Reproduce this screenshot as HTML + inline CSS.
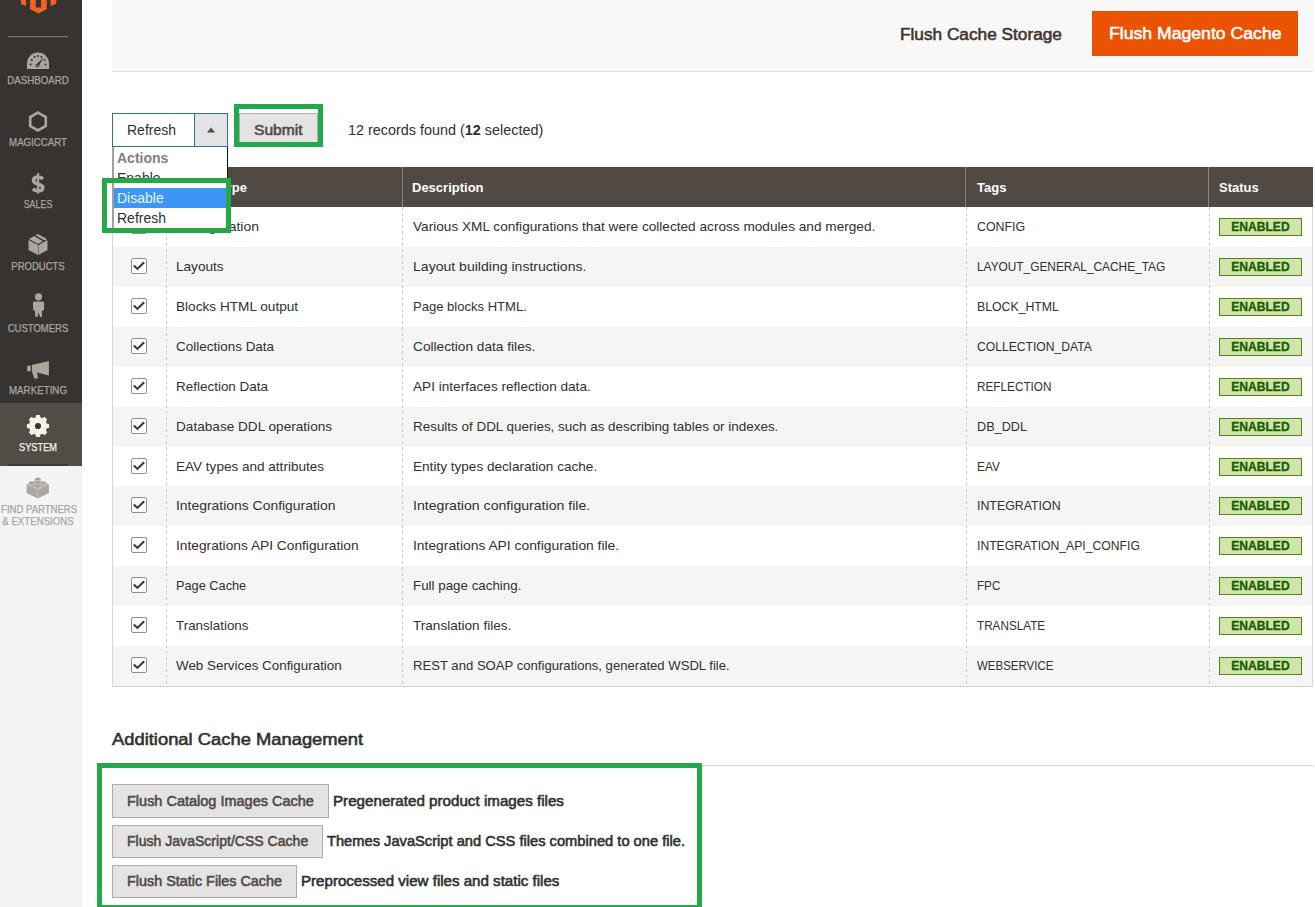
<!DOCTYPE html>
<html><head><meta charset="utf-8">
<style>
*{margin:0;padding:0;box-sizing:border-box}
html,body{width:1315px;height:907px;overflow:hidden;background:#fff;font-family:"Liberation Sans",sans-serif;color:#303030}
.abs{position:absolute}
.sb{font-weight:normal;-webkit-text-stroke:0.55px currentColor;transform-origin:0 50%}
#side{position:absolute;left:0;top:0;width:82px;height:466px;background:#373330}
#sidelow{position:absolute;left:0;top:466px;width:82px;height:441px;background:#f4f4f4}
.mlabel{position:absolute;left:-3px;width:82px;text-align:center;font-size:10.6px;-webkit-text-stroke:0.25px currentColor;color:#aaa6a0;white-space:nowrap;line-height:12px}
#hdr{position:absolute;left:112px;top:0;width:1201px;height:72px;background:#f8f8f8;border-bottom:1px solid #e3e3e3}
.t{position:absolute;white-space:nowrap}
.btn2{position:absolute;background:#e3e3e3;border:1px solid #adadad;color:#514943;font-weight:bold;white-space:nowrap}
.gbox{position:absolute;border:5px solid #23a84b}
#tbl{position:absolute;left:112px;top:167px;width:1201px;height:520px;border:1px solid #d6d6d6;border-top:none}
.hrow{position:absolute;left:-1px;top:0;width:1201px;height:40px;background:#514943}
.hsep{position:absolute;top:0;width:1px;height:40px;background:#8a837f}
.ht{position:absolute;top:1px;line-height:40px;color:#fff;font-weight:bold;font-size:13px;white-space:nowrap}
.row{position:absolute;left:0;width:1199px;height:40px}
.row.alt{background:#f5f5f5}
.dsep{position:absolute;top:40px;width:1px;height:480px;background-image:linear-gradient(#c8c8c8 50%,transparent 50%);background-size:1px 6px}
.cell{position:absolute;top:0;transform-origin:0 50%;line-height:40px;font-size:13.5px;color:#303030;white-space:nowrap}
.cb{position:absolute;left:18px;top:11px;width:16px;height:16px;border:1px solid #8f8f8f;border-radius:2px;background:#fff}
.tag{left:864px;font-size:13px}
.cb svg{position:absolute;left:-1px;top:-1px}
.badge{position:absolute;left:1106px;top:11px;width:83px;height:18px;background:#d0e5a9;border:1px solid #5b8116;color:#185b00;font-weight:bold;font-size:13px;line-height:16px;text-align:center}
.badge span{display:inline-block;transform:scaleX(0.93);-webkit-text-stroke:0.3px #185b00}
</style></head><body>

<!-- sidebar -->
<div id="side"></div>
<div id="sidelow"></div>
<div class="abs" style="left:0;top:403px;width:82px;height:63px;background:#524c47"></div>
<div class="abs" style="left:8px;top:464px;width:60px;height:2px;background:#3e3935"></div>
<svg class="abs" style="left:0;top:0" width="82" height="40" viewBox="0 0 82 40">
  <polygon points="20.7,0 25.9,0 25.9,6.2 21,3.7" fill="#f26322"/>
  <polygon points="30.1,0 35.8,0 35.8,7.4 41,7.4 41,0 46.7,0 46.7,9.2 38.5,13.6 30.1,9.2" fill="#f26322"/>
  <polygon points="50.7,0 56.4,0 56.1,3.7 50.7,6.2" fill="#f26322"/>
  <rect x="8" y="36" width="60" height="1.2" fill="#7a746e"/>
</svg>
<!-- dashboard gauge -->
<svg class="abs" style="left:26px;top:52px" width="24" height="18" viewBox="0 0 24 18">
  <path d="M1,17 L1,11.5 A11,11 0 0 1 23,11.5 L23,17 Z" fill="#aaa6a0"/>
  <g fill="#373330"><circle cx="4.5" cy="12.5" r="1"/><circle cx="5.8" cy="8" r="1"/><circle cx="8.6" cy="5" r="1"/><circle cx="12" cy="4" r="1"/><circle cx="15.4" cy="5" r="1"/><circle cx="18.6" cy="8" r="1"/><circle cx="19.5" cy="12.5" r="1"/></g>
  <path d="M10.2,12.8 L17.5,5.5 L12.8,14 Z" fill="#373330"/><circle cx="11.3" cy="13.6" r="1.8" fill="#373330"/><circle cx="11.3" cy="13.6" r="0.8" fill="#aaa6a0"/>
</svg>
<div class="mlabel" style="transform:scaleX(0.914);top:74px">DASHBOARD</div>
<!-- hexagon -->
<svg class="abs" style="left:27px;top:110px" width="22" height="23" viewBox="0 0 22 23">
  <polygon points="11,2.6 18.8,7 18.8,16 11,20.4 3.2,16 3.2,7" fill="none" stroke="#aaa6a0" stroke-width="2.6"/>
</svg>
<div class="mlabel" style="transform:scaleX(0.913);top:136px">MAGICCART</div>
<!-- dollar -->
<svg class="abs" style="left:30px;top:172px" width="16" height="23" viewBox="30 172 16 23">
  <rect x="37" y="173" width="2.2" height="20.6" fill="#aaa6a0"/>
  <path d="M42.9,179 C41.6,177.6 40,177 38.2,177 C35.4,177 33.6,178.4 33.6,180.6 C33.6,185.2 42.8,183.2 42.8,187.4 C42.8,189.6 40.8,190.8 38,190.8 C36,190.8 34.2,190.2 32.8,188.9" fill="none" stroke="#aaa6a0" stroke-width="3.6"/>
</svg>
<div class="mlabel" style="transform:scaleX(0.84);top:198px">SALES</div>
<!-- products box -->
<svg class="abs" style="left:28px;top:234px" width="20" height="22" viewBox="0 0 20 22">
  <polygon points="0.5,6 10,11 10,21 0.5,16" fill="#aaa6a0"/>
  <polygon points="10.5,11 19.5,6 19.5,16 10.5,21" fill="#aaa6a0"/>
  <polygon points="1,5 6,2 15,7.3 10,10" fill="#aaa6a0"/>
  <polygon points="7.5,1.2 10,0 19,5 16.5,6.4" fill="#aaa6a0"/>
</svg>
<div class="mlabel" style="transform:scaleX(0.896);top:260px">PRODUCTS</div>
<!-- person -->
<svg class="abs" style="left:32px;top:292px" width="13" height="26" viewBox="0 0 13 26">
  <circle cx="6.5" cy="4.8" r="3.6" fill="#aaa6a0"/>
  <path d="M0.9,11 Q0.9,9.5 2.4,9.5 L10.7,9.5 Q12.2,9.5 12.2,11 L12,17.8 L10,18.9 L9.8,25 L8.1,25 L6.7,20.5 L5.4,25 L3.4,25 L2.9,18.9 L1.2,17.8 Z" fill="#aaa6a0"/>
</svg>
<div class="mlabel" style="transform:scaleX(0.896);top:322px">CUSTOMERS</div>
<!-- megaphone -->
<svg class="abs" style="left:27px;top:360px" width="23" height="20" viewBox="0 0 23 20">
  <rect x="0.2" y="5.7" width="3.5" height="5.5" fill="#aaa6a0"/>
  <polygon points="4.85,4.9 21.9,1 21.9,15.6 10.2,12.6 10.9,18.6 7.3,18.6 5.1,12" fill="#aaa6a0"/>
</svg>
<div class="mlabel" style="transform:scaleX(0.922);top:384px">MARKETING</div>
<!-- gear -->
<svg class="abs" style="left:26px;top:414px" width="24" height="24" viewBox="-12 -12 24 24">
  <path d="M-3.21,-7.76 L-1.89,-8.18 L-1.48,-10.50 L1.48,-10.50 L1.89,-8.18 L3.21,-7.76 L3.22,-7.76 L4.45,-7.12 L6.38,-8.47 L8.47,-6.38 L7.12,-4.45 L7.76,-3.22 L7.76,-3.21 L8.18,-1.89 L10.50,-1.48 L10.50,1.48 L8.18,1.89 L7.76,3.21 L7.76,3.22 L7.12,4.45 L8.47,6.38 L6.38,8.47 L4.45,7.12 L3.22,7.76 L3.21,7.76 L1.89,8.18 L1.48,10.50 L-1.48,10.50 L-1.89,8.18 L-3.21,7.76 L-3.22,7.76 L-4.45,7.12 L-6.38,8.47 L-8.47,6.38 L-7.12,4.45 L-7.76,3.22 L-7.76,3.21 L-8.18,1.89 L-10.50,1.48 L-10.50,-1.48 L-8.18,-1.89 L-7.76,-3.21 L-7.76,-3.22 L-7.12,-4.45 L-8.47,-6.38 L-6.38,-8.47 L-4.45,-7.12 L-3.22,-7.76Z" fill="#f7f3eb" stroke="#f7f3eb" stroke-width="1.2" stroke-linejoin="round"/>
  <circle r="3.1" fill="#3a3532"/>
</svg>
<div class="mlabel" style="transform:scaleX(0.872);top:441px;color:#f7f3eb">SYSTEM</div>
<!-- lego -->
<svg class="abs" style="left:26px;top:476px" width="24" height="24" viewBox="0 0 24 24">
  <polygon points="0.6,8.3 11.6,3.4 22.9,8.3 22.9,17.1 11.6,22.6 0.6,17.1" fill="#aba7a3"/>
  <polyline points="0.6,8.3 11.6,13.2 22.9,8.3" fill="none" stroke="#cfccc8" stroke-width="0.7"/>
  <line x1="11.6" y1="13.2" x2="11.6" y2="22.6" stroke="#cfccc8" stroke-width="0.7"/>
  <g fill="#a3a09c" stroke="#dedbd8" stroke-width="0.6">
    <ellipse cx="11.9" cy="3.2" rx="3" ry="1.7"/><ellipse cx="5.8" cy="7" rx="3" ry="1.7"/><ellipse cx="17.1" cy="7" rx="3" ry="1.7"/><ellipse cx="11.6" cy="10.3" rx="3" ry="1.7"/>
  </g>
</svg>
<div class="mlabel" style="transform:scaleX(0.9);top:503px;color:#aaa6a0">FIND PARTNERS</div>
<div class="mlabel" style="transform:scaleX(0.913);top:515px;color:#aaa6a0">&amp; EXTENSIONS</div>

<!-- header -->
<div id="hdr"></div>
<div class="t sb" style="left:900px;top:25px;font-size:16px;color:#41362f;line-height:20px;transform:scaleX(1.077)">Flush Cache Storage</div>
<div class="abs" style="left:1092px;top:11px;width:206px;height:45px;background:#eb5202"></div><div class="t sb" style="left:1109px;top:24px;color:#fff;font-size:16px;line-height:20px;transform:scaleX(1.102)">Flush Magento Cache</div>

<!-- actions row -->
<div class="abs" style="left:112px;top:113px;width:116px;height:34px;border:1px solid #3b6c9e;background:#fff"></div>
<div class="abs" style="left:194px;top:114px;width:33px;height:32px;background:#e3e3e3;border-left:1px solid #3b6c9e"></div>
<svg class="abs" style="left:207px;top:127px" width="8" height="6" viewBox="0 0 8 6"><polygon points="0,5.5 4,0.5 8,5.5" fill="#514943"/></svg>
<div class="t" style="left:127px;top:121px;font-size:14px;line-height:18px;color:#303030">Refresh</div>

<div class="btn2" style="left:239px;top:113px;width:79px;height:34px"></div><div class="t sb" style="left:254px;top:121px;font-size:14px;line-height:18px;color:#514943;transform:scaleX(1.112)">Submit</div>
<div class="gbox" style="left:234px;top:104px;width:89px;height:43px"></div>

<div class="t" style="left:348px;top:121px;font-size:14.4px;line-height:18px;color:#303030">12 records found (<b>12</b> selected)</div>

<!-- table -->
<div id="tbl">
  <div class="hrow">
    <div class="hsep" style="left:54px"></div>
    <div class="hsep" style="left:290px"></div>
    <div class="hsep" style="left:853px"></div>
    <div class="hsep" style="left:1096px"></div>
    <div class="ht" style="left:63px">Cache Type</div>
    <div class="ht" style="left:300px">Description</div>
    <div class="ht" style="left:865px">Tags</div>
    <div class="ht" style="left:1107px">Status</div>
  </div>
  <div class="row" style="top:40.00px"><div class="cb"><svg width="16" height="16" viewBox="0 0 16 16"><path d="M2.8,7.4 L6.4,10.9 L13.2,4.2" fill="none" stroke="#41362f" stroke-width="2.1"/></svg></div><div class="cell" style="left:63px;transform:scaleX(1.033)">Configuration</div><div class="cell" style="left:300px;transform:scaleX(1.010)">Various XML configurations that were collected across modules and merged.</div><div class="cell tag" style="transform:scaleX(0.951)">CONFIG</div><div class="badge"><span>ENABLED</span></div></div>
<div class="row alt" style="top:79.92px"><div class="cb"><svg width="16" height="16" viewBox="0 0 16 16"><path d="M2.8,7.4 L6.4,10.9 L13.2,4.2" fill="none" stroke="#41362f" stroke-width="2.1"/></svg></div><div class="cell" style="left:63px;transform:scaleX(1.007)">Layouts</div><div class="cell" style="left:300px;transform:scaleX(1.041)">Layout building instructions.</div><div class="cell tag" style="transform:scaleX(0.913)">LAYOUT_GENERAL_CACHE_TAG</div><div class="badge"><span>ENABLED</span></div></div>
<div class="row" style="top:119.84px"><div class="cb"><svg width="16" height="16" viewBox="0 0 16 16"><path d="M2.8,7.4 L6.4,10.9 L13.2,4.2" fill="none" stroke="#41362f" stroke-width="2.1"/></svg></div><div class="cell" style="left:63px;transform:scaleX(1.009)">Blocks HTML output</div><div class="cell" style="left:300px;transform:scaleX(0.966)">Page blocks HTML.</div><div class="cell tag" style="transform:scaleX(0.945)">BLOCK_HTML</div><div class="badge"><span>ENABLED</span></div></div>
<div class="row alt" style="top:159.76px"><div class="cb"><svg width="16" height="16" viewBox="0 0 16 16"><path d="M2.8,7.4 L6.4,10.9 L13.2,4.2" fill="none" stroke="#41362f" stroke-width="2.1"/></svg></div><div class="cell" style="left:63px;transform:scaleX(0.998)">Collections Data</div><div class="cell" style="left:300px;transform:scaleX(1.013)">Collection data files.</div><div class="cell tag" style="transform:scaleX(0.933)">COLLECTION_DATA</div><div class="badge"><span>ENABLED</span></div></div>
<div class="row" style="top:199.68px"><div class="cb"><svg width="16" height="16" viewBox="0 0 16 16"><path d="M2.8,7.4 L6.4,10.9 L13.2,4.2" fill="none" stroke="#41362f" stroke-width="2.1"/></svg></div><div class="cell" style="left:63px;transform:scaleX(0.997)">Reflection Data</div><div class="cell" style="left:300px;transform:scaleX(1.008)">API interfaces reflection data.</div><div class="cell tag" style="transform:scaleX(0.905)">REFLECTION</div><div class="badge"><span>ENABLED</span></div></div>
<div class="row alt" style="top:239.60px"><div class="cb"><svg width="16" height="16" viewBox="0 0 16 16"><path d="M2.8,7.4 L6.4,10.9 L13.2,4.2" fill="none" stroke="#41362f" stroke-width="2.1"/></svg></div><div class="cell" style="left:63px;transform:scaleX(1.008)">Database DDL operations</div><div class="cell" style="left:300px;transform:scaleX(0.995)">Results of DDL queries, such as describing tables or indexes.</div><div class="cell tag" style="transform:scaleX(0.974)">DB_DDL</div><div class="badge"><span>ENABLED</span></div></div>
<div class="row" style="top:279.52px"><div class="cb"><svg width="16" height="16" viewBox="0 0 16 16"><path d="M2.8,7.4 L6.4,10.9 L13.2,4.2" fill="none" stroke="#41362f" stroke-width="2.1"/></svg></div><div class="cell" style="left:63px;transform:scaleX(1.003)">EAV types and attributes</div><div class="cell" style="left:300px;transform:scaleX(1.006)">Entity types declaration cache.</div><div class="cell tag" style="transform:scaleX(0.912)">EAV</div><div class="badge"><span>ENABLED</span></div></div>
<div class="row alt" style="top:319.44px"><div class="cb"><svg width="16" height="16" viewBox="0 0 16 16"><path d="M2.8,7.4 L6.4,10.9 L13.2,4.2" fill="none" stroke="#41362f" stroke-width="2.1"/></svg></div><div class="cell" style="left:63px;transform:scaleX(1.031)">Integrations Configuration</div><div class="cell" style="left:300px;transform:scaleX(1.045)">Integration configuration file.</div><div class="cell tag" style="transform:scaleX(0.951)">INTEGRATION</div><div class="badge"><span>ENABLED</span></div></div>
<div class="row" style="top:359.36px"><div class="cb"><svg width="16" height="16" viewBox="0 0 16 16"><path d="M2.8,7.4 L6.4,10.9 L13.2,4.2" fill="none" stroke="#41362f" stroke-width="2.1"/></svg></div><div class="cell" style="left:63px;transform:scaleX(1.018)">Integrations API Configuration</div><div class="cell" style="left:300px;transform:scaleX(1.025)">Integrations API configuration file.</div><div class="cell tag" style="transform:scaleX(0.937)">INTEGRATION_API_CONFIG</div><div class="badge"><span>ENABLED</span></div></div>
<div class="row alt" style="top:399.28px"><div class="cb"><svg width="16" height="16" viewBox="0 0 16 16"><path d="M2.8,7.4 L6.4,10.9 L13.2,4.2" fill="none" stroke="#41362f" stroke-width="2.1"/></svg></div><div class="cell" style="left:63px;transform:scaleX(0.945)">Page Cache</div><div class="cell" style="left:300px;transform:scaleX(0.989)">Full page caching.</div><div class="cell tag" style="transform:scaleX(0.896)">FPC</div><div class="badge"><span>ENABLED</span></div></div>
<div class="row" style="top:439.20px"><div class="cb"><svg width="16" height="16" viewBox="0 0 16 16"><path d="M2.8,7.4 L6.4,10.9 L13.2,4.2" fill="none" stroke="#41362f" stroke-width="2.1"/></svg></div><div class="cell" style="left:63px;transform:scaleX(0.993)">Translations</div><div class="cell" style="left:300px;transform:scaleX(1.005)">Translation files.</div><div class="cell tag" style="transform:scaleX(0.901)">TRANSLATE</div><div class="badge"><span>ENABLED</span></div></div>
<div class="row alt" style="top:479.12px"><div class="cb"><svg width="16" height="16" viewBox="0 0 16 16"><path d="M2.8,7.4 L6.4,10.9 L13.2,4.2" fill="none" stroke="#41362f" stroke-width="2.1"/></svg></div><div class="cell" style="left:63px;transform:scaleX(0.992)">Web Services Configuration</div><div class="cell" style="left:300px;transform:scaleX(0.971)">REST and SOAP configurations, generated WSDL file.</div><div class="cell tag" style="transform:scaleX(0.884)">WEBSERVICE</div><div class="badge"><span>ENABLED</span></div></div>
  <div class="dsep" style="left:53px"></div>
  <div class="dsep" style="left:289px"></div>
  <div class="dsep" style="left:853px"></div>
  <div class="dsep" style="left:1096px"></div>
</div>

<!-- dropdown list -->
<div class="abs" style="left:112px;top:147px;width:116px;height:82px;background:#fff;border-left:2px solid #a0a0a0;border-right:1px solid #111"></div>
<div class="t" style="left:117px;top:148px;font-size:14px;line-height:20px;font-weight:bold;color:#808080">Actions</div>
<div class="t" style="left:117px;top:168px;font-size:14px;line-height:20px;color:#303030">Enable</div>
<div class="abs" style="left:102px;top:178px;width:129px;height:55px;border:5px solid #23a84b;background:transparent"></div>
<div class="abs" style="left:114px;top:183px;width:112px;height:5px;background:#fff"></div>
<div class="abs" style="left:114px;top:188px;width:112px;height:20px;background:#3d95f5"></div>
<div class="t" style="left:117px;top:188px;font-size:14px;line-height:20px;color:#e6f8ff">Disable</div>
<div class="t" style="left:117px;top:208px;font-size:14px;line-height:20px;color:#303030">Refresh</div>

<!-- additional -->
<div class="t sb" style="left:112px;top:729px;font-size:16.5px;line-height:20px;color:#303030;transform:scaleX(1.113)">Additional Cache Management</div>
<div class="abs" style="left:112px;top:765px;width:1201px;height:1px;background:#d1d1c8"></div>
<div class="gbox" style="left:97px;top:763px;width:605px;height:147px;background:#fff"></div>
<div class="btn2" style="left:112px;top:784px;width:217px;height:34px"></div><div class="t sb" style="left:127px;top:792px;font-size:14px;line-height:18px;color:#514943;transform:scaleX(1.035)">Flush Catalog Images Cache</div>
<div class="t sb" style="left:333px;top:791px;font-size:14px;line-height:20px;color:#303030;transform:scaleX(1.083)">Pregenerated product images files</div>
<div class="btn2" style="left:112px;top:825px;width:211px;height:33px"></div><div class="t sb" style="left:127px;top:832px;font-size:14px;line-height:18px;color:#514943;transform:scaleX(1.004)">Flush JavaScript/CSS Cache</div>
<div class="t sb" style="left:327px;top:831px;font-size:14px;line-height:20px;color:#303030;transform:scaleX(1.048)">Themes JavaScript and CSS files combined to one file.</div>
<div class="btn2" style="left:112px;top:865px;width:185px;height:33px"></div><div class="t sb" style="left:127px;top:872px;font-size:14px;line-height:18px;color:#514943;transform:scaleX(1.027)">Flush Static Files Cache</div>
<div class="t sb" style="left:301px;top:871px;font-size:14px;line-height:20px;color:#303030;transform:scaleX(1.078)">Preprocessed view files and static files</div>

</body></html>
